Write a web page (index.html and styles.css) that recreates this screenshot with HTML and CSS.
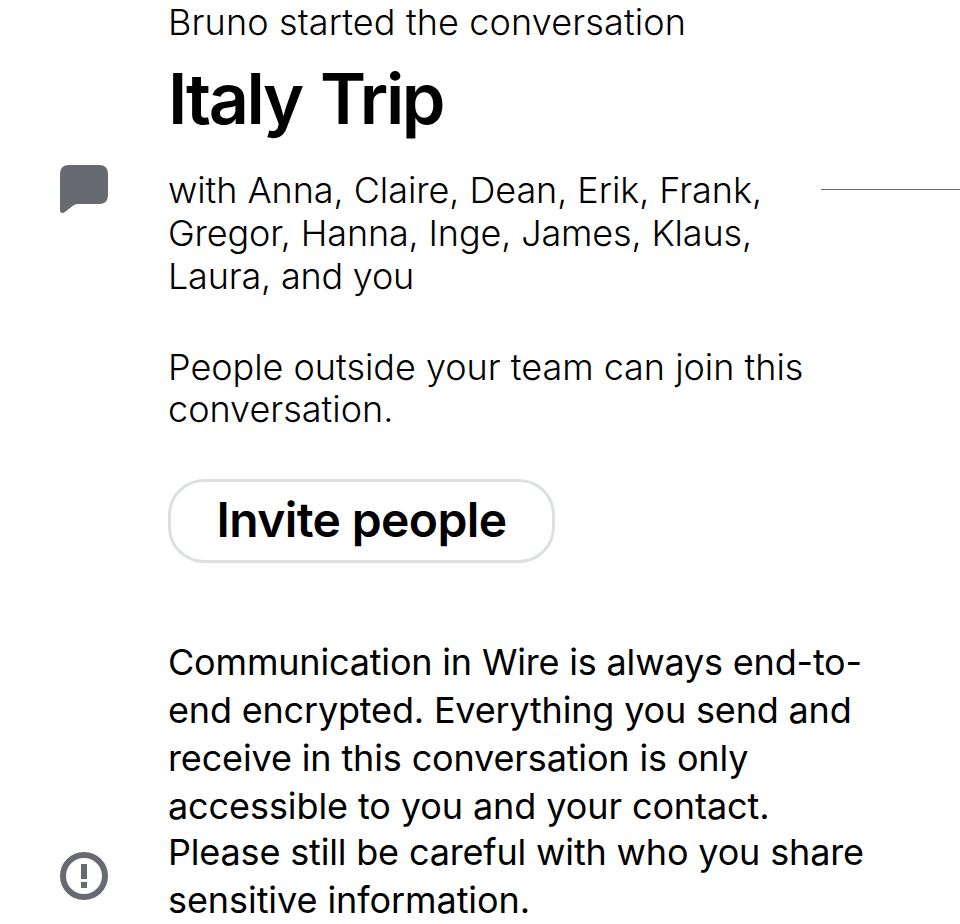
FILE: index.html
```
<!DOCTYPE html>
<html lang="en">
<head>
<meta charset="utf-8">
<title>Italy Trip</title>
<link rel="stylesheet" href="styles.css">
</head>
<body>
<main class="conversation">
  <section class="intro">
    <p class="started"><span class="l1">Bruno started the conversation</span></p>
    <h1 class="title">Italy Trip</h1>
    <div class="members">
      <svg class="icon" viewBox="0 0 48 48"><path d="M9 0H39Q48 0 48 9V30Q48 39 39 39H18Q15 39 12.500 41L5 47Q3.500 48 2.500 48Q0 48 0 45V9Q0 0 9 0Z"/></svg>
      <p class="names"><span class="l2">with Anna, Claire, Dean, Erik, Frank,</span><br><span class="l3">Gregor, Hanna, Inge, James, Klaus,</span><br><span class="l4">Laura, and you</span></p>
      <span class="rule"></span>
    </div>
    <p class="guests"><span class="l5">People outside your team can join this</span><br><span class="l6">conversation.</span></p>
    <button class="invite">Invite people</button>
  </section>
  <section class="notice">
    <p class="encrypted"><span class="n1">Communication in Wire is always end-to-</span><br><span class="n2">end encrypted. Everything you send and</span><br><span class="n3">receive in this conversation is only</span><br><span class="n4">accessible to you and your contact.</span></p>
    <div class="careful">
      <svg class="icon alert" viewBox="0 0 48 48"><circle cx="24" cy="24" r="21"/><path d="M21 12h6v15h-6zM21 30h6v6h-6z"/></svg>
      <p class="advice"><span class="n5">Please still be careful with who you share</span><br><span class="n6">sensitive information.</span></p>
    </div>
  </section>
</main>
</body>
</html>
```
FILE: styles.css
```
* { box-sizing: border-box; }
body { margin: 0; background: #fff; color: #000; font-family: Inter, sans-serif; }
p, h1 { margin: 0; white-space: nowrap; }
.conversation { height: 924px; overflow: hidden; padding-left: 168px; }
.started, .names, .guests { font-size: 36px; line-height: 43px; font-weight: 300; }
.started { padding-top: 1px; }
.title { margin-top: 13px; font-size: 70px; line-height: 84px; font-weight: 600; letter-spacing: -2.4px; word-spacing: 3px; }
.members { display: grid; grid-template-columns: 48px 593px 139px; column-gap: 60px; margin: 24px 0 0 -108px; }
.icon { display: block; width: 48px; height: 48px; fill: #676b71; }
.names { margin-top: 4px; }
.rule { height: 1px; background: #676b71; margin-top: 24px; }
.guests { margin-top: 48px; line-height: 42px; }
.invite { display: block; width: 387px; height: 84px; margin-top: 49px; border: 3px solid #dce0e3; border-radius: 36px; background: #fff; color: #000; font: 600 48px/76px Inter, sans-serif; letter-spacing: -0.62px; padding: 0 0 2px; white-space: nowrap; }
.notice { margin-top: 75px; font-size: 36px; line-height: 48px; font-weight: 400; }
.careful { display: grid; grid-template-columns: 48px 1fr; column-gap: 60px; margin: -2px 0 0 -108px; }
.alert { margin-top: 24px; }
.alert circle { fill: none; stroke: #676b71; stroke-width: 6; }
.l1 { letter-spacing: 0.13px; }
.l2 { letter-spacing: -0.07px; }
.l3 { letter-spacing: -0.15px; }
.l4 { letter-spacing: -0.2px; }
.l5 { letter-spacing: -0.02px; }
.n1, .n2 { letter-spacing: -0.18px; }
.n3 { letter-spacing: -0.14px; }
.n4 { letter-spacing: -0.09px; }
.n5 { letter-spacing: -0.17px; }
.n6 { letter-spacing: -0.07px; }
```
